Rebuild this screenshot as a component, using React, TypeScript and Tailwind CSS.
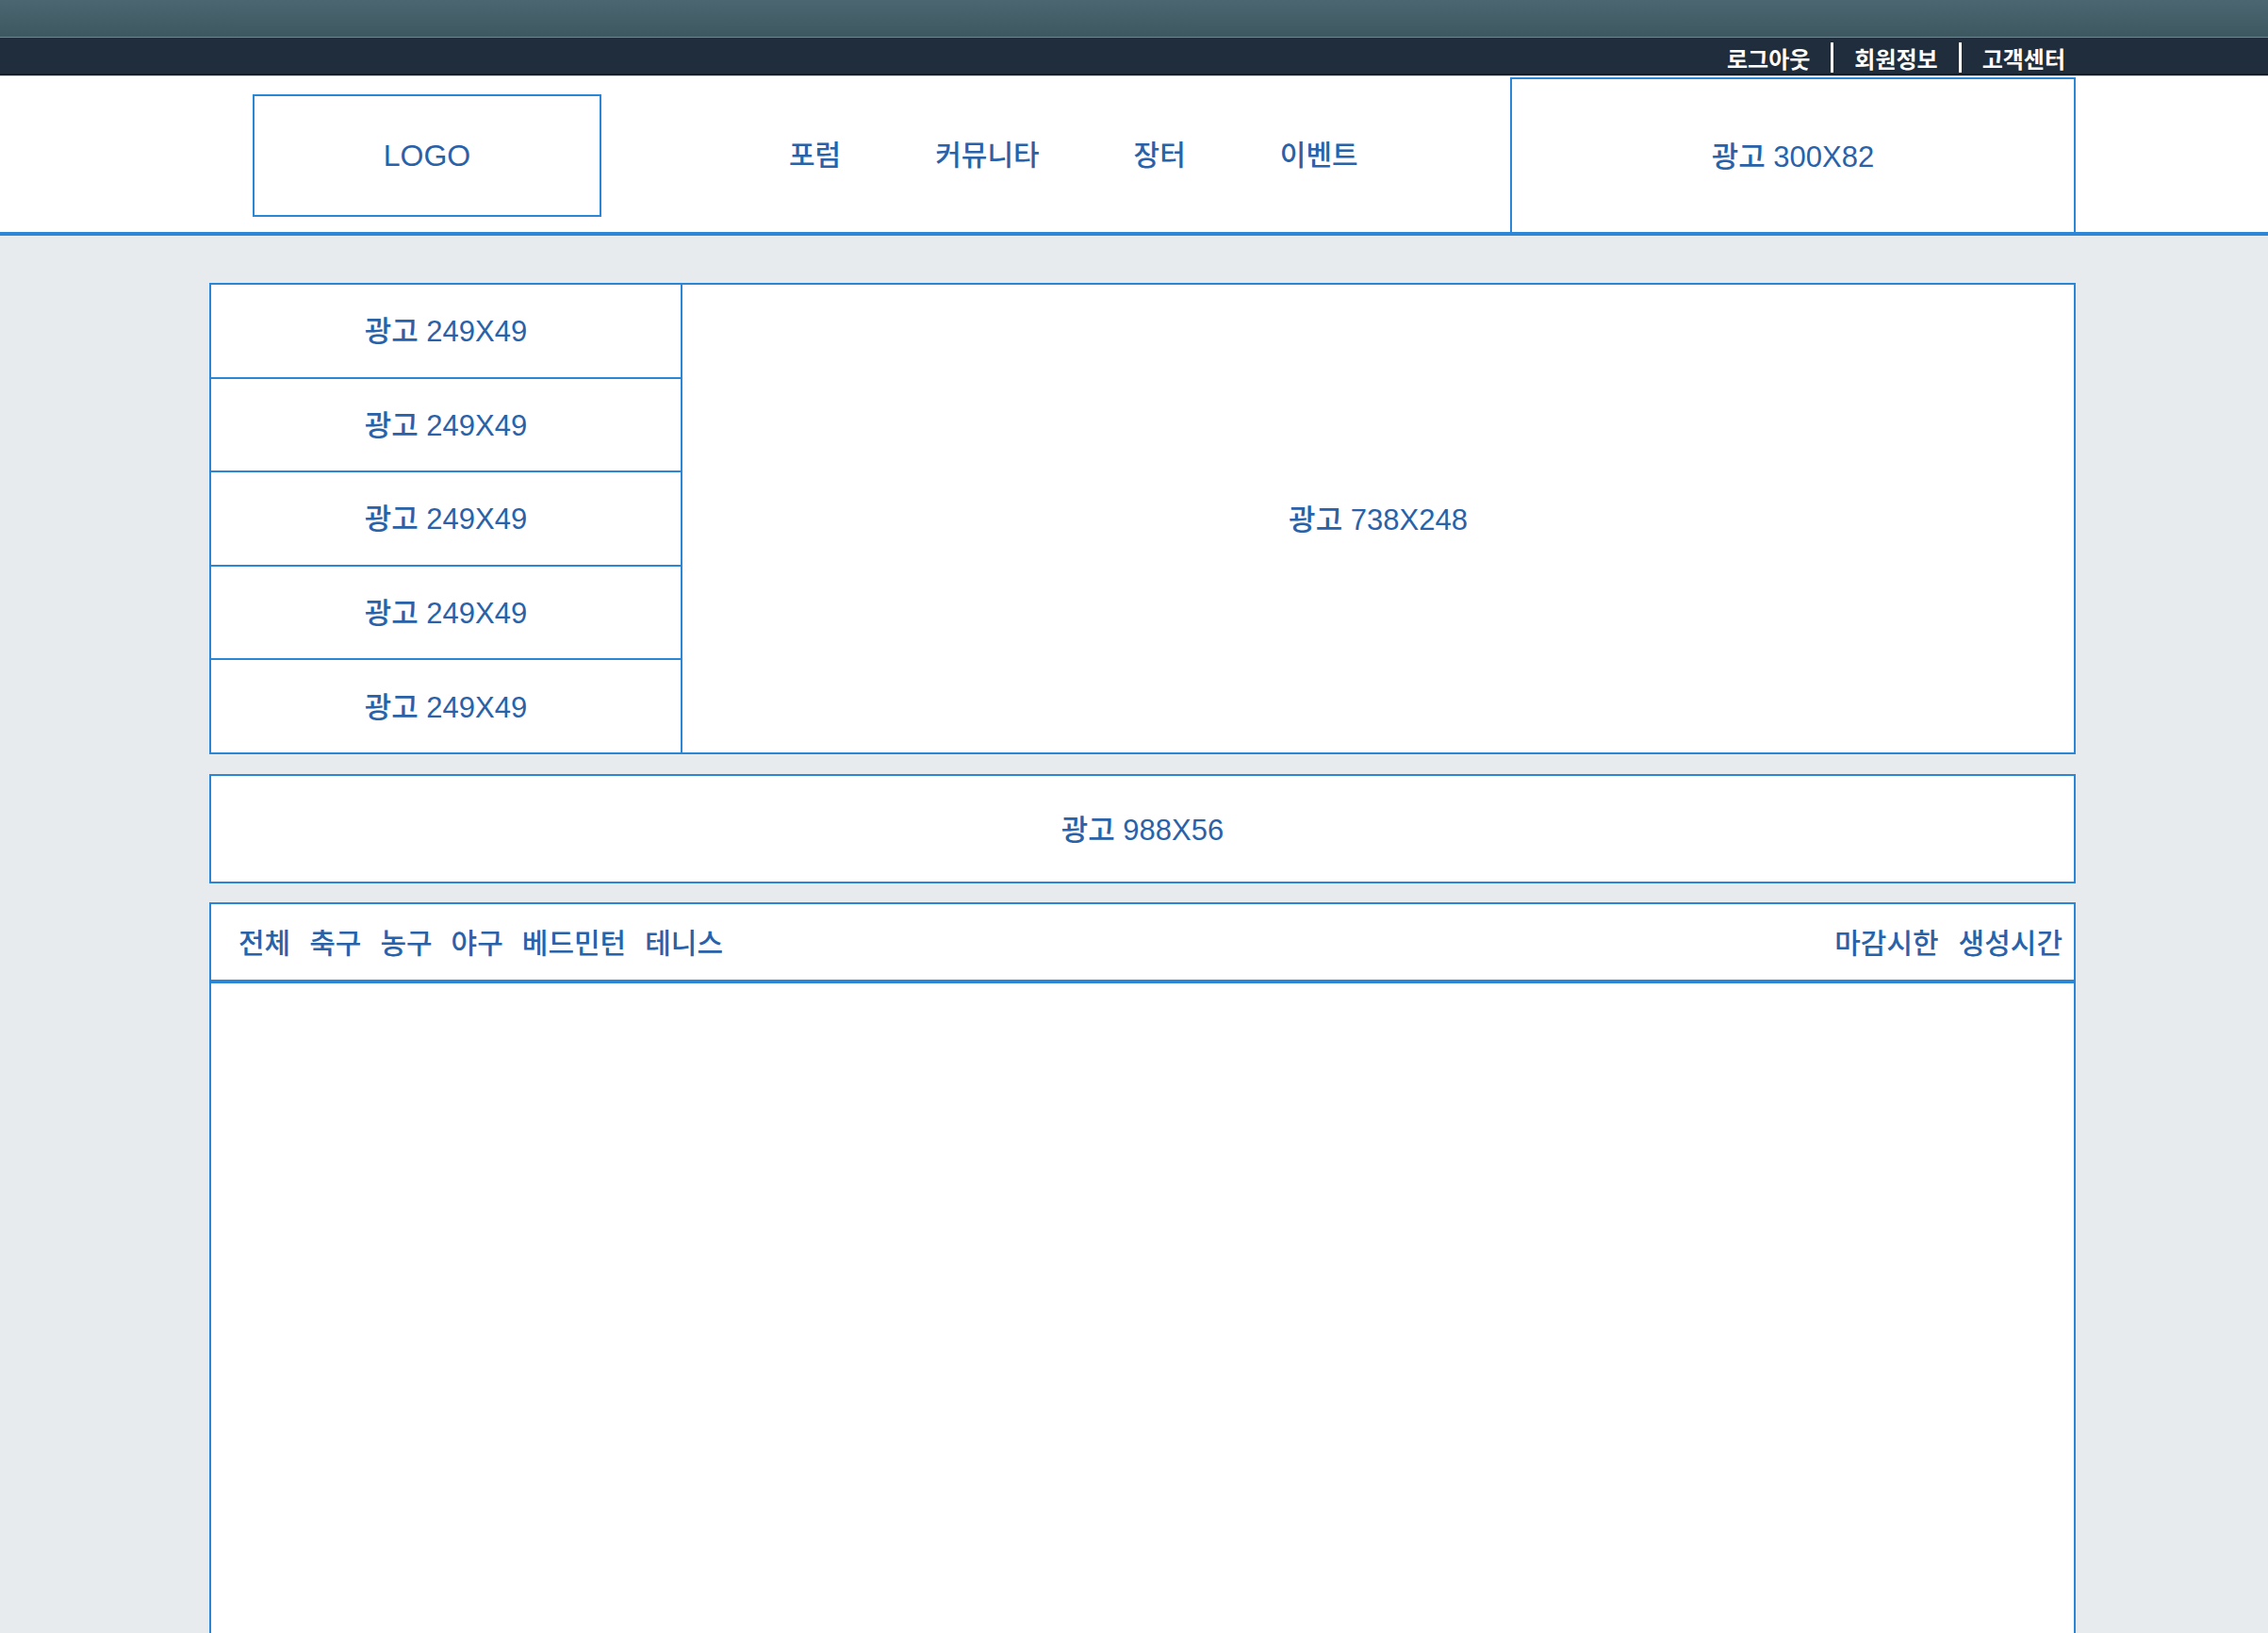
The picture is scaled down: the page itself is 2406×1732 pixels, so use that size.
import React from "react";

const leftAds = [0, 1, 2, 3, 4];
const navItems = ["포럼", "커뮤니타", "장터", "이벤트"];
const tabs = ["전체", "축구", "농구", "야구", "베드민턴", "테니스"];
const sorts = ["마감시한", "생성시간"];

export default function App() {
  return (
    <div className="min-h-screen bg-[#e7ebee] font-['Liberation_Sans','Noto_Sans_CJK_KR',sans-serif] overflow-hidden">
      {/* top gradient strip */}
      <div className="h-[40px] bg-linear-to-b from-[#4c6671] to-[#3e5862] border-b border-[#71838c]" />

      {/* account bar */}
      <div className="h-[40px] bg-[#1f2d3d] border-b-2 border-[#151f2a]">
        <div className="ml-[222px] w-[1980px] h-full flex justify-end items-center gap-[22px] pr-[11px]">
          <span className="text-[24px] font-bold text-white leading-none pt-[9px]">로그아웃</span>
          <span className="w-[3px] h-[32px] bg-white mt-[4px]" />
          <span className="text-[24px] font-bold text-white leading-none pt-[9px]">회원정보</span>
          <span className="w-[3px] h-[32px] bg-white mt-[4px]" />
          <span className="text-[24px] font-bold text-white leading-none pt-[9px]">고객센터</span>
        </div>
      </div>

      {/* header */}
      <header className="h-[170px] bg-white border-t border-[#c9ced4] border-b-4 border-b-[#2e87d6]">
        <div className="ml-[222px] w-[1980px] h-full flex items-center">
          <div className="ml-[46px] mt-[3px] w-[370px] h-[130px] border-2 border-[#2b86d6] flex items-center justify-center">
            <span className="text-[32px] text-[#2962a8] leading-none">LOGO</span>
          </div>
          <nav className="ml-[199px] flex items-center gap-[100px] pt-[3px]">
            {navItems.map((n) => (
              <span key={n} className="text-[30px] font-medium text-[#2962a8] leading-none">
                {n}
              </span>
            ))}
          </nav>
          <div className="ml-auto self-end w-[600px] h-[164px] border-2 border-b-0 border-[#2b86d6] flex items-center justify-center">
            <span className="text-[31px] font-medium text-[#2962a8] leading-none pt-[3px]">광고 300X82</span>
          </div>
        </div>
      </header>

      {/* main */}
      <main className="pt-[50px]">
        <div className="ml-[222px] w-[1980px]">
          {/* top ad block */}
          <div className="h-[500px] border-2 border-[#2b86d6] bg-white flex">
            <div className="w-[500px] shrink-0 border-r-2 border-[#2b86d6] flex flex-col">
              {leftAds.map((i) => (
                <div
                  key={i}
                  className="flex-1 flex items-center justify-center border-b-2 border-[#2b86d6] last:border-b-0"
                >
                  <span className="text-[31px] font-medium text-[#2962a8] leading-none pt-[2px]">광고 249X49</span>
                </div>
              ))}
            </div>
            <div className="flex-1 flex items-center justify-center">
              <span className="text-[31px] font-medium text-[#2962a8] leading-none pt-[2px]">광고 738X248</span>
            </div>
          </div>

          {/* banner */}
          <div className="mt-[21px] h-[116px] border-2 border-[#2b86d6] bg-white flex items-center justify-center">
            <span className="text-[31px] font-medium text-[#2962a8] leading-none pt-[2px]">광고 988X56</span>
          </div>

          {/* list box */}
          <div className="mt-[20px] border-2 border-b-0 border-[#2b86d6] bg-white">
            <div className="h-[84px] border-b-4 border-[#2b86d6] flex items-center justify-between pl-[29px] pr-[12px] pt-[4px]">
              <div className="flex items-center gap-[20px]">
                {tabs.map((t) => (
                  <span key={t} className="text-[30px] font-medium text-[#2962a8] leading-none">
                    {t}
                  </span>
                ))}
              </div>
              <div className="flex items-center gap-[21px]">
                {sorts.map((s) => (
                  <span key={s} className="text-[30px] font-medium text-[#2962a8] leading-none">
                    {s}
                  </span>
                ))}
              </div>
            </div>
            <div className="h-[740px]" />
          </div>
        </div>
      </main>
    </div>
  );
}
